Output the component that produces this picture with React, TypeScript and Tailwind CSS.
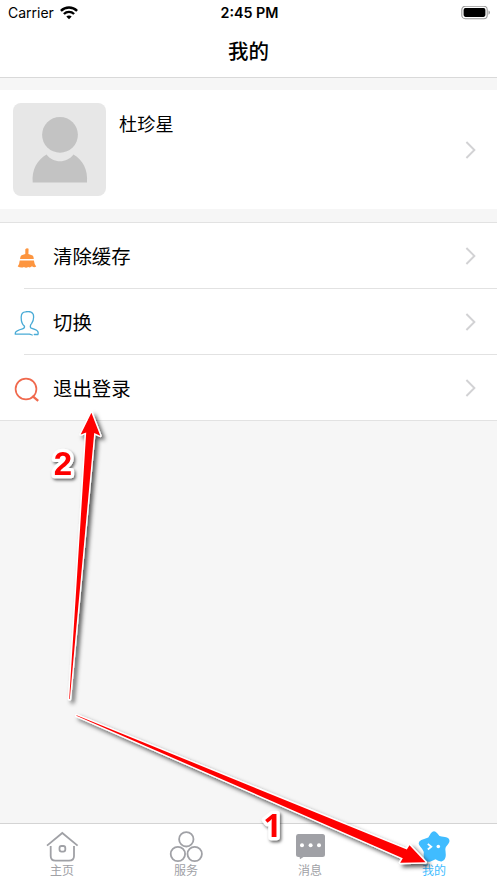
import React from 'react';

interface IMenuItem {
  id: string;
  label: string;
  icon: React.ReactNode;
}

interface ITab {
  id: string;
  label: string;
  icon: React.ReactNode;
}

/* ---------------- Icons ---------------- */
const WifiIcon = () => (
  <svg width="18" height="14" viewBox="0 0 18 14" fill="none" stroke="#000" strokeWidth="2.4">
    <path d="M0.9 4.9C5.5 0.4 12.5 0.4 17.1 4.9" />
    <path d="M3.9 8C6.8 5.2 11.2 5.2 14.1 8" />
    <path d="M9 13.2L6.3 10.5C7.8 9.1 10.2 9.1 11.7 10.5Z" fill="#000" stroke="none" />
  </svg>
);

const BatteryIcon = () => (
  <svg width="30" height="14" viewBox="0 0 30 14">
    <rect x="0.8" y="0.3" width="25.4" height="12.4" rx="3.4" fill="none" stroke="#999" strokeWidth="1.1" />
    <rect x="2.6" y="2.1" width="21.8" height="8.8" rx="1.8" fill="#000" />
    <path d="M27.5 4.5C29.4 5.1 29.4 8.1 27.5 8.7Z" fill="#999" />
  </svg>
);

const ChevronIcon = () => (
  <svg width="12" height="18" viewBox="0 0 12 18" fill="none" stroke="#d2d2d4" strokeWidth="1.9">
    <path d="M1.4 1L9.4 9L1.4 17" />
  </svg>
);

const AvatarIcon = () => (
  <svg width="93" height="93" viewBox="0 0 93 93" fill="#c3c3c3">
    <circle cx="47" cy="31.8" r="17.9" />
    <path d="M33.5 51.5C40 60.5 54 60.5 60.5 51.5C70 57 75 67 74 79.4H19.7C18.7 67 24 57 33.5 51.5Z" />
  </svg>
);

const BroomIcon = () => (
  <svg width="20" height="21" viewBox="0 0 20 21" fill="#fd953f">
    <path d="M8.3 1.2Q10 -0.3 11.6 0.8L11.4 6.1L15.6 7.4Q16.7 7.9 16.8 11H3Q3.4 7.6 4.5 7.2L8.3 6Z" />
    <path d="M2.7 12.5H16.9Q17.3 16.3 19.2 18.6Q16.9 19.8 15 18.3Q13.1 20.2 11.2 19Q9 20.5 7 19Q4 20.3 0.7 18.5Q2.5 16.3 2.7 12.5Z" />
  </svg>
);

const PersonIcon = () => (
  <svg width="26" height="27" viewBox="0 0 26 27" fill="none" stroke="#49abd6" strokeWidth="1.3" strokeLinecap="round" strokeLinejoin="round">
    <path d="M10.3 15Q7 12.5 7.2 6Q7.4 0.9 11.5 0.8Q17.5 -0.4 19.2 3.2Q20.5 8 17.7 12.4Q15.2 15.4 17.2 17.2Q23.6 19.1 24 21Q24.4 22.8 23.9 23.5H20.3" />
    <path d="M10.5 15.4Q10.8 17.2 8.5 17.8Q2 19.6 1.5 21.4L1.2 23.2H15.5L18.2 24" />
  </svg>
);

const SearchIcon = () => (
  <svg width="26" height="26" viewBox="0 0 26 26" fill="none" stroke="#f0694d" strokeWidth="1.7">
    <circle cx="12" cy="12" r="10.4" />
    <path d="M18.3 18.8L24.2 23.8" strokeWidth="2.3" />
  </svg>
);

const HomeIcon = () => (
  <svg width="34" height="34" viewBox="0 0 34 34" fill="none" stroke="#a0a1a6" strokeWidth="1.8">
    <path d="M2 16.6L17.3 4L32.6 16.6" />
    <path d="M5.7 17V27Q5.7 31.7 10.5 31.7H24Q29 31.7 29 27V17" />
    <rect x="14.5" y="17" width="5.8" height="5.6" rx="2" />
  </svg>
);

const ServiceIcon = () => (
  <svg width="34" height="34" viewBox="0 0 34 34" fill="none" stroke="#a0a1a6" strokeWidth="1.8">
    <circle cx="17.3" cy="10.3" r="7.2" />
    <circle cx="8.9" cy="25" r="7.2" />
    <circle cx="25.7" cy="25" r="7.2" />
  </svg>
);

const MessageIcon = () => (
  <svg width="34" height="34" viewBox="0 0 34 34">
    <path d="M5 5H29.5Q32 5 32 7.5V25.5Q32 28 29.5 28H10.5L7 30.3L6.6 28H5.5Q3 28 3 25.5V7.5Q3 5 5 5Z" fill="#a0a1a6" />
    <g fill="#fff">
      <circle cx="9" cy="16.3" r="2" />
      <circle cx="17.6" cy="16.3" r="2" />
      <circle cx="26" cy="16.3" r="2" />
    </g>
  </svg>
);

const StarIcon = () => (
  <svg width="34" height="34" viewBox="0 0 34 34">
    <path
      d="M14 4Q17 0.3 20 4L22.5 7Q24 7.6 28 8Q33.3 9 32.3 13Q31.5 15.2 29.2 17.5Q28 19 28.5 22L28.8 26Q28.8 31.3 24.5 32.4Q21.5 32.6 18.5 30.3Q16 31.5 13 32.7Q7.5 33.5 7 29Q6.4 26.5 6.8 23Q6 20.5 3.2 17.5Q-0.3 13.5 4.3 11L11.3 8.6Q12.6 6.5 14 4Z"
      fill="#40bcff"
    />
    <path d="M10.8 14.9L14.3 17.7L10.8 20.5" fill="none" stroke="#fff" strokeWidth="1.8" />
    <circle cx="21.3" cy="17.5" r="1.8" fill="#fff" />
  </svg>
);

const menuItems: IMenuItem[] = [
  { id: 'cache', label: '清除缓存', icon: <BroomIcon /> },
  { id: 'switch', label: '切换', icon: <PersonIcon /> },
  { id: 'logout', label: '退出登录', icon: <SearchIcon /> },
];

const tabs: ITab[] = [
  { id: 'home', label: '主页', icon: <HomeIcon /> },
  { id: 'service', label: '服务', icon: <ServiceIcon /> },
  { id: 'message', label: '消息', icon: <MessageIcon /> },
  { id: 'mine', label: '我的', icon: <StarIcon /> },
];

/* Step arrows and numbers drawn over the screen */
const Annotations = () => (
  <svg className="pointer-events-none absolute inset-0" width="497" height="883" viewBox="0 0 497 883">
    <defs>
      <filter id="shadow" filterUnits="userSpaceOnUse" x="0" y="0" width="497" height="883">
        <feDropShadow dx="3" dy="3" stdDeviation="2.2" floodColor="#000" floodOpacity="0.65" />
      </filter>
      <filter id="textShadow" filterUnits="userSpaceOnUse" x="0" y="0" width="497" height="883">
        <feDropShadow dx="1.5" dy="2" stdDeviation="1.5" floodColor="#000" floodOpacity="0.6" />
      </filter>
    </defs>
    <g fill="#fe0000" stroke="#fff" strokeWidth="2.8" strokeLinejoin="round" paintOrder="stroke" filter="url(#shadow)">
      <path d="M91.4 412.8L100.3 435.8L94.2 433L69.8 699L69.2 699L86.2 432.5L80.7 434.4Z" />
      <path d="M425.5 862.3L400.2 862.8L402.8 858.2L76.4 715.8L76.6 715.2L406.8 849.5L409.5 845.2Z" />
    </g>
    <g
      className="text-[32px] font-bold"
      fill="#fe0000"
      stroke="#fff"
      strokeWidth="6.6"
      strokeLinejoin="round"
      paintOrder="stroke"
      textAnchor="middle"
      filter="url(#textShadow)"
    >
      <text className="font-['Liberation_Sans',Arial,sans-serif] text-[33px]" x="63" y="475">
        2
      </text>
      <text className="font-['Open_Sans',Arial,sans-serif]" x="272.5" y="837">
        1
      </text>
    </g>
  </svg>
);

const App: React.FC = () => {
  const activeTab = 'mine';

  return (
    <div className="relative flex h-[883px] w-[497px] flex-col overflow-hidden bg-[#f6f6f6] font-['Inter','Noto_Sans_CJK_SC',sans-serif] text-black">
      {/* Header */}
      <header className="h-[78px] border-b border-[#d9d9d9] bg-white">
        <div className="grid h-[25px] grid-cols-3 items-center pl-2 pr-[6px]">
          <div className="flex items-center gap-[6px] text-[14px]">
            <span>Carrier</span>
            <WifiIcon />
          </div>
          <span className="text-center text-[14.3px] font-semibold">2:45 PM</span>
          <div className="flex justify-end">
            <BatteryIcon />
          </div>
        </div>
        <h1 className="text-center text-[20.5px] font-medium leading-[54px]">我的</h1>
      </header>

      {/* Profile */}
      <section className="mt-3 flex h-[119px] items-center bg-white pl-[13px] pr-5">
        <div className="overflow-hidden rounded-lg bg-[#e7e7e7]">
          <AvatarIcon />
        </div>
        <span className="ml-[13px] mt-[21px] self-start text-[18.2px] leading-[26px]">杜珍星</span>
        <div className="ml-auto">
          <ChevronIcon />
        </div>
      </section>

      {/* Menu */}
      <ul className="mt-[13px] border-y border-[#e2e2e2] bg-white">
        {menuItems.map((item, index) => (
          <li key={item.id}>
            {index > 0 && <div className="ml-6 h-px bg-[#e2e2e2]" />}
            <div className="flex h-[65px] items-center pr-5">
              <div className="flex w-[53px] justify-center pt-[5px]">{item.icon}</div>
              <span className="pt-0.5 text-[19.4px] leading-7">{item.label}</span>
              <div className="ml-auto">
                <ChevronIcon />
              </div>
            </div>
          </li>
        ))}
      </ul>

      {/* Tab bar */}
      <nav className="mt-auto grid h-[60px] grid-cols-4 border-t border-[#d4d4d4] bg-white pr-px">
        {tabs.map((tab) => (
          <div
            key={tab.id}
            className={`flex flex-col items-center pt-[5px] ${
              tab.id === activeTab ? 'text-[#40bcff]' : 'text-[#a0a1a6]'
            }`}
          >
            {tab.icon}
            <span className="text-[12px] leading-4">{tab.label}</span>
          </div>
        ))}
      </nav>

      <Annotations />
    </div>
  );
};

export default App;
